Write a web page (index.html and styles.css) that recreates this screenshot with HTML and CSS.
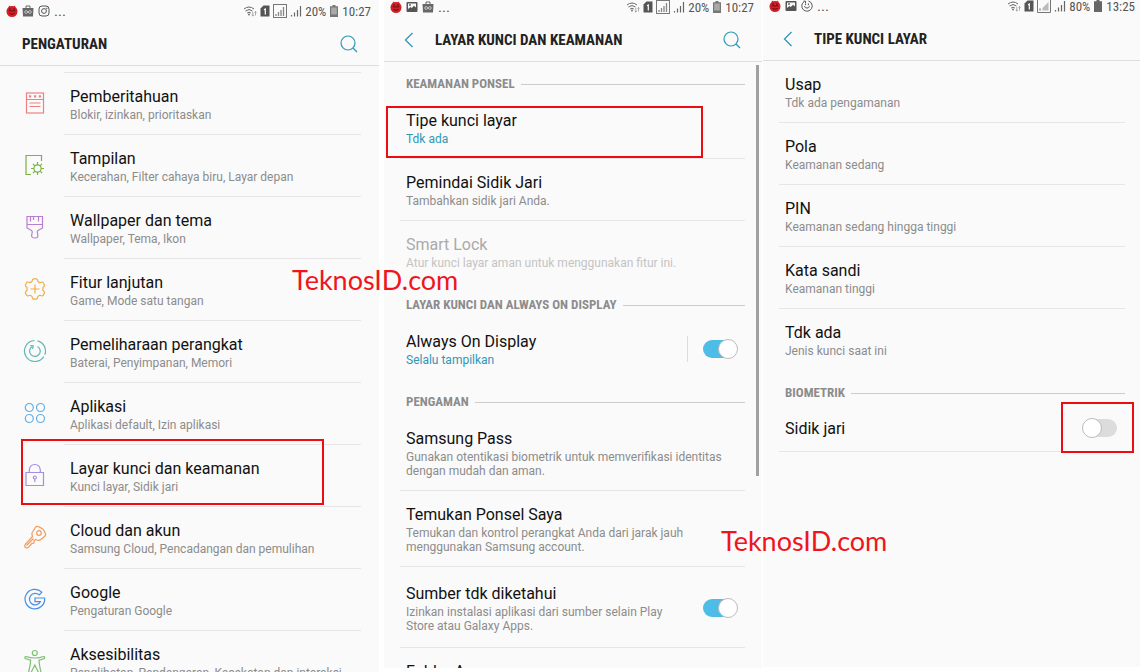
FILE: index.html
```html
<!DOCTYPE html>
<html lang="id">
<head>
    <meta charset="UTF-8">
    <title>Pengaturan Layar Kunci</title>
    <link rel="stylesheet" href="styles.css">
</head>
<body>
    <!-- shared icons -->
    <svg class="sprite" aria-hidden="true">
        <symbol id="bug" viewBox="0 0 12 12">
            <path d="M3 .5l1.300 1h3.400L9 .5l.5 2.500h-7z" fill="#d3232a"/>
            <circle cx="6" cy="6.500" r="5.500" fill="#cf2127"/>
            <path d="M4 3v2.500M8 3v2.500M2.800 5.800h2M7.200 5.800h2M3.400 8.500q2.600 1.500 5.200 0M6 5v2" stroke="#5e0a0d" stroke-width=".9" fill="none"/>
        </symbol>
        <symbol id="bag" viewBox="0 0 12 12">
            <path d="M4 3V1h4v2" fill="none" stroke="#666"/>
            <path d="M.5 3h11L11 11.500H1z" fill="#666"/>
            <path d="M6 7C4.500 5 2.800 5.500 2.800 7s1.700 2 3.200 0 3.200-1.500 3.200 0S7.500 9 6 7z" fill="none" stroke="#eee" stroke-width=".8"/>
        </symbol>
        <symbol id="camera" viewBox="0 0 12 12">
            <g fill="none" stroke="#555"><rect x="1" y="1" width="10" height="10" rx="3"/><circle cx="6" cy="6" r="2.400"/></g>
            <circle cx="8.800" cy="3.200" r=".7" fill="#555"/>
        </symbol>
        <symbol id="photo" viewBox="0 0 12 12">
            <rect x=".5" y="1" width="11" height="10" rx="1" fill="#555"/>
            <path d="M2 2.500h8v4L8 4.800 5.800 7 4.500 6 2 8z" fill="#fafafa"/>
            <circle cx="4" cy="4" r=".9" fill="#555"/>
        </symbol>
        <symbol id="smile" viewBox="0 0 12 12">
            <g fill="none" stroke="#555"><path d="M7.500 1A5.200 5.200 0 1 1 3.200 1.600M3.500 6.200a2.600 2.600 0 0 0 5 0M4.600 3.500v1.700M7.400 3.500v1.700M2.500 1.200h2v2"/></g>
        </symbol>
        <symbol id="wifi" viewBox="0 0 14 12">
            <path d="M1 4q5-4 10 0M2.500 6q3.500-3 7 0M4.200 8q1.800-1.600 3.600 0" fill="none" stroke="#666"/>
            <circle cx="6" cy="9.500" r=".9" fill="#666"/>
            <path d="M9.800 7v4M8.700 10l1.100 1 1.100-1M12.500 10.500v-4M11.500 7.500l1-1 1 1" fill="none" stroke="#888" stroke-width=".7"/>
        </symbol>
        <symbol id="sim" viewBox="0 0 10 12">
            <path d="M3.500 .5H9.500v11H.5V3.500z" fill="#555"/>
            <path d="M4 4.800L5.300 4v5.500" fill="none" stroke="#fff" stroke-width="1.200"/>
        </symbol>
        <symbol id="signal-box" viewBox="0 0 14 14">
            <rect x=".5" y=".5" width="13" height="13" fill="none" stroke="#777"/>
            <path d="M3 12v-2M5.500 12V8M8 12V6M10.500 12V3" stroke="#888" stroke-width="1.300"/>
        </symbol>
        <symbol id="signal-low" viewBox="0 0 14 14">
            <path d="M.5 .5v13h13V.5" fill="none" stroke="#777"/>
            <path d="M5.500 11.500V9L11.500 3v8.500z" fill="#bbb"/><path d="M3 11.500v-2" stroke="#555"/>
        </symbol>
        <symbol id="signal" viewBox="0 0 12 12">
            <path d="M1.500 11.500V10M4.500 11.500V7.500M7.500 11.500V5M10.500 11.500V1" stroke="#666" stroke-width="1.200"/>
        </symbol>
        <symbol id="battery" viewBox="0 0 8 12">
            <path d="M2.500 0h3v1.200H8V12H0V1.200h2.500z" fill="#666"/>
        </symbol>
        <symbol id="battery-low" viewBox="0 0 8 12">
            <path d="M2.500 0h3v1.200H8V12H0V1.200h2.500z" fill="#777"/><path d="M1.200 2.500h5.600v7H1.200z" fill="#a9a9a9"/>
        </symbol>
        <symbol id="search" viewBox="0 0 18 18">
            <g fill="none" stroke="#2f97b7" stroke-width="1.200"><circle cx="8" cy="8" r="7"/><path d="M13 13l4 4"/></g>
        </symbol>
        <symbol id="back" viewBox="0 0 10 16">
            <path d="M8.500 1L1.500 8l7 7" fill="none" stroke="#2f97b7" stroke-width="1.300"/>
        </symbol>
    </svg>

    <main class="screens">
        <section class="screen">
            <div class="status">
                <svg class="s12"><use href="#bug"/></svg>
                <svg class="s12"><use href="#bag"/></svg>
                <svg class="s12"><use href="#camera"/></svg>
                <span class="dots">...</span>
                <div class="status-right">
                    <svg class="wifi"><use href="#wifi"/></svg>
                    <svg class="sim"><use href="#sim"/></svg>
                    <svg class="s14"><use href="#signal-box"/></svg>
                    <svg class="s12"><use href="#signal"/></svg>
                    <span>20%</span>
                    <svg class="battery"><use href="#battery-low"/></svg>
                    <span>10:27</span>
                </div>
            </div>
            <header class="bar bar-main">
                <h1>PENGATURAN</h1>
                <button class="icon-btn" type="button" aria-label="Cari"><svg class="s18"><use href="#search"/></svg></button>
            </header>
            <ul class="menu">
                <li class="item">
                    <svg class="icon" viewBox="0 0 24 24" stroke="#f08080">
                        <rect x="3.500" y="2" width="17" height="20"/><path d="M3.500 8.500h17M6.500 12h11M6.500 15.500h11"/>
                        <path d="M6 5.300h2.200M11 5.300h2.200M15.800 5.300H18" stroke-width="2.200"/>
                    </svg>
                    <a class="text" href="#"><b>Pemberitahuan</b><small>Blokir, izinkan, prioritaskan</small></a>
                </li>
                <li class="item">
                    <svg class="icon" viewBox="0 0 24 24" stroke="#7cb342">
                        <path d="M8 21.500H3V2.500h15.500V8"/><circle cx="14.500" cy="15.500" r="3.600"/>
                        <path d="M14.500 9v2.900M14.500 19.100V22M8 15.500h2.900M18.100 15.500H21M9.900 10.900l2 2M17.100 18.100l2 2M19.100 10.900l-2 2M11.900 18.100l-2 2"/>
                    </svg>
                    <a class="text" href="#"><b>Tampilan</b><small>Kecerahan, Filter cahaya biru, Layar depan</small></a>
                </li>
                <li class="item">
                    <svg class="icon" viewBox="0 0 24 24" stroke="#b67fd0">
                        <path d="M4 1.500h15.500V13l-4.500 2.500q-1 .5-.7 1.800l.6 3.200q.2 2.500-3.100 2.500t-3.200-2.500l.6-3.200q.3-1.300-.7-1.800L4 13zM4 9.500h15.500M7.500 1.500v5M10.500 1.500v3.500M15.500 1.500v5"/>
                    </svg>
                    <a class="text" href="#"><b>Wallpaper dan tema</b><small>Wallpaper, Tema, Ikon</small></a>
                </li>
                <li class="item">
                    <svg class="icon" viewBox="0 0 24 24" stroke="#f2ac48">
                        <path d="M9 4.500q.3-2.500 1.300-2.700h3.200q1 .2 1.400 2.700 1 .8 2 1.100 2.300-1 3.100-.3l1.600 2.800q.2 1-1.700 2.400v2.900q1.900 1.400 1.700 2.400L20 18.600q-.8.7-3.100-.3-1 .3-2 1.100-.4 2.600-1.400 2.800h-3.200q-1-.2-1.300-2.800-1-.8-2-1.100-2.300 1-3.100.3l-1.600-2.800q-.2-1 1.700-2.400v-2.900Q2.100 9.100 2.300 8.100l1.600-2.800q.8-.7 3.100.3 1-.3 2-1.100zM7.500 12h9M12 7.500v9"/>
                    </svg>
                    <a class="text" href="#"><b>Fitur lanjutan</b><small>Game, Mode satu tangan</small></a>
                </li>
                <li class="item">
                    <svg class="icon" viewBox="0 0 24 24" stroke="#5db8b5">
                        <path d="M14.500 1.800a10.500 10.500 0 0 1 7.300 13.900M20.800 17.700A10.500 10.500 0 1 1 11.500 1.500M14.500 7.500a5.300 5.300 0 1 1-5.500.2M7.200 6.500l3 .3-.6 3.200"/>
                    </svg>
                    <a class="text" href="#"><b>Pemeliharaan perangkat</b><small>Baterai, Penyimpanan, Memori</small></a>
                </li>
                <li class="item">
                    <svg class="icon" viewBox="0 0 24 24" stroke="#62aee0">
                        <circle cx="6.300" cy="6.500" r="4"/><circle cx="17.500" cy="6.500" r="4"/><circle cx="6.300" cy="17.500" r="4"/><circle cx="17.500" cy="17.500" r="4"/>
                    </svg>
                    <a class="text" href="#"><b>Aplikasi</b><small>Aplikasi default, Izin aplikasi</small></a>
                </li>
                <li class="item">
                    <svg class="icon" viewBox="0 0 24 24" stroke="#a58ce6">
                        <path d="M3 9.500h17.500v13H3zM6.300 9.500V7q.5-5.500 5.500-5.500T17.300 7v2.500M11.800 19v-3"/><circle cx="11.800" cy="14.500" r="1.500"/>
                    </svg>
                    <a class="text" href="#"><b>Layar kunci dan keamanan</b><small>Kunci layar, Sidik jari</small></a>
                    <span class="mark mark-menu"></span>
                </li>
                <li class="item">
                    <svg class="icon" viewBox="0 0 24 24" stroke="#f29a5c">
                        <path d="M12.500 2.300q1-1.300 3-.6l2.500 1.200q2.500 1.200 3.500 3.600l1 2.500q.4 1.500-1 2.500l-4 3.200q-1.500 1-3.500.3l-1.500-.5-1.500 1.500v2l-2 .3-3.500 4q-1.500 1.200-3 .2t0-3.500l7-7.500-.5-2q-.3-1.500.5-2.500zM3.500 20.500l7-7"/><circle cx="16" cy="8" r="2.300"/>
                    </svg>
                    <a class="text" href="#"><b>Cloud dan akun</b><small>Samsung Cloud, Pencadangan dan pemulihan</small></a>
                </li>
                <li class="item">
                    <svg class="icon" viewBox="0 0 24 24" stroke="#4b8fe2">
                        <path d="M18.800 5.200A9.800 9.800 0 1 0 21.600 11H12v3.600h5.500a5.800 5.800 0 1 1-1.300-6.700zM16.200 7.900l2.600-2.700"/>
                    </svg>
                    <a class="text" href="#"><b>Google</b><small>Pengaturan Google</small></a>
                </li>
                <li class="item">
                    <svg class="icon" viewBox="0 0 24 24" stroke="#7fbf72">
                        <circle cx="11.800" cy="4" r="2.500"/>
                        <path d="M3 7.500q4 1.500 8.800 1.500t8.800-1.500q1.500.2.900 2L16 11.200l.5 5 1.500 7.300h-2.500L11.800 16l-3.700 7.500H5.600l1.500-7.300.5-5L2.100 9.500q-.6-1.800.9-2z"/>
                    </svg>
                    <a class="text" href="#"><b>Aksesibilitas</b><small>Penglihatan, Pendengaran, Kecekatan dan interaksi</small></a>
                </li>
            </ul>
        </section>

        <section class="screen screen-security">
            <div class="status">
                <svg class="s12"><use href="#bug"/></svg>
                <svg class="s12"><use href="#photo"/></svg>
                <svg class="s12"><use href="#bag"/></svg>
                <span class="dots">...</span>
                <div class="status-right">
                    <svg class="wifi"><use href="#wifi"/></svg>
                    <svg class="sim"><use href="#sim"/></svg>
                    <svg class="s14"><use href="#signal-box"/></svg>
                    <svg class="s12"><use href="#signal"/></svg>
                    <span>20%</span>
                    <svg class="battery"><use href="#battery-low"/></svg>
                    <span>10:27</span>
                </div>
            </div>
            <header class="bar">
                <button class="icon-btn back" type="button" aria-label="Kembali"><svg><use href="#back"/></svg></button>
                <h1>LAYAR KUNCI DAN KEAMANAN</h1>
                <button class="icon-btn" type="button" aria-label="Cari"><svg class="s18"><use href="#search"/></svg></button>
            </header>
            <div class="list">
                <h2>KEAMANAN PONSEL</h2>
                <div class="row">
                    <a class="text" href="#"><b>Tipe kunci layar</b><small class="value">Tdk ada</small></a>
                    <span class="mark mark-type"></span>
                </div>
                <div class="row"><a class="text" href="#"><b>Pemindai Sidik Jari</b><small>Tambahkan sidik jari Anda.</small></a></div>
                <div class="row last disabled"><div class="text"><b>Smart Lock</b><small>Atur kunci layar aman untuk menggunakan fitur ini.</small></div></div>
                <h2>LAYAR KUNCI DAN ALWAYS ON DISPLAY</h2>
                <div class="row last">
                    <label class="text" for="aod"><b>Always On Display</b><small class="value">Selalu tampilkan</small></label>
                    <span class="split"></span>
                    <input class="switch" type="checkbox" id="aod" checked>
                </div>
                <h2>PENGAMAN</h2>
                <div class="row"><a class="text" href="#"><b>Samsung Pass</b><small>Gunakan otentikasi biometrik untuk memverifikasi identitas dengan mudah dan aman.</small></a></div>
                <div class="row"><a class="text narrow" href="#"><b>Temukan Ponsel Saya</b><small>Temukan dan kontrol perangkat Anda dari jarak jauh menggunakan Samsung account.</small></a></div>
                <div class="row tall">
                    <label class="text narrow" for="unknown"><b>Sumber tdk diketahui</b><small>Izinkan instalasi aplikasi dari sumber selain Play Store atau Galaxy Apps.</small></label>
                    <input class="switch" type="checkbox" id="unknown" checked>
                </div>
                <div class="row"><a class="text" href="#"><b>Folder Aman</b></a></div>
            </div>
            <span class="scrollbar"></span>
        </section>

        <section class="screen screen-type">
            <div class="status">
                <svg class="s12"><use href="#bug"/></svg>
                <svg class="s12"><use href="#photo"/></svg>
                <svg class="s12"><use href="#smile"/></svg>
                <span class="dots">...</span>
                <div class="status-right">
                    <svg class="wifi"><use href="#wifi"/></svg>
                    <svg class="sim"><use href="#sim"/></svg>
                    <svg class="s14"><use href="#signal-low"/></svg>
                    <svg class="s12"><use href="#signal"/></svg>
                    <span>80%</span>
                    <svg class="battery"><use href="#battery"/></svg>
                    <span>13:25</span>
                </div>
            </div>
            <header class="bar">
                <button class="icon-btn back" type="button" aria-label="Kembali"><svg><use href="#back"/></svg></button>
                <h1>TIPE KUNCI LAYAR</h1>
            </header>
            <div class="list">
                <div class="row"><a class="text" href="#"><b>Usap</b><small>Tdk ada pengamanan</small></a></div>
                <div class="row"><a class="text" href="#"><b>Pola</b><small>Keamanan sedang</small></a></div>
                <div class="row"><a class="text" href="#"><b>PIN</b><small>Keamanan sedang hingga tinggi</small></a></div>
                <div class="row"><a class="text" href="#"><b>Kata sandi</b><small>Keamanan tinggi</small></a></div>
                <div class="row last"><a class="text" href="#"><b>Tdk ada</b><small>Jenis kunci saat ini</small></a></div>
                <h2>BIOMETRIK</h2>
                <div class="row single">
                    <label class="text" for="finger"><b>Sidik jari</b></label>
                    <input class="switch" type="checkbox" id="finger">
                    <span class="mark mark-switch"></span>
                </div>
            </div>
        </section>

        <span class="watermark watermark-left">TeknosID.com</span>
        <span class="watermark watermark-right">TeknosID.com</span>
    </main>
</body>
</html>
```

FILE: styles.css
```css
:root {
    --accent: #2f97b7;
    --switch: #4dbce6;
    --line: #e6e6e6;
    --muted: #8c8c8c;
    --mark: #ec0c12;
}

*,
*::before,
*::after {
    box-sizing: border-box;
}

body {
    margin: 0;
    background: #fff;
    color: #111;
    font-family: Roboto, sans-serif;
    overflow: hidden;
}

.sprite {
    position: absolute;
    width: 0;
    height: 0;
}

.screens {
    position: relative;
    display: flex;
    height: 100vh;
    overflow: hidden;
}

.screen {
    position: relative;
    flex: 379 1 0;
    min-width: 0;
    height: 100vh;
    background: #fafafa;
    overflow: hidden;
}

.screen-security {
    flex-grow: 378;
    margin: -4px 1px 0 5px;
}

.screen-type {
    flex-grow: 377;
    margin-top: -5px;
}

/* status bar */
.status {
    display: flex;
    align-items: center;
    gap: 4px;
    height: 22px;
    padding: 0 8px 0 6px;
    color: #555;
    font-family: "Roboto Condensed", Roboto, sans-serif;
    font-size: 13px;
}

.screen-type .status {
    padding-right: 5px;
}

.dots {
    font-size: 15px;
}

.status-right {
    display: flex;
    align-items: center;
    gap: 3px;
    margin-left: auto;
}

.s12 { width: 12px; height: 12px; }
.s14 { width: 14px; height: 14px; }
.s18 { width: 18px; height: 18px; }
.wifi { width: 14px; height: 12px; }
.sim { width: 10px; height: 12px; }
.battery { width: 8px; height: 12px; margin: 0 1px; }

/* title bar */
.bar {
    display: flex;
    align-items: center;
    height: 44px;
    padding: 0 21px 0 20px;
    border-bottom: 1px solid #dedede;
}

.bar-main {
    padding-left: 22px;
}

h1 {
    flex: 1;
    margin: 0;
    padding-top: 1px;
    color: #222;
    font-family: "Roboto Condensed", Roboto, sans-serif;
    font-size: 15px;
    font-weight: 700;
    line-height: 20px;
}

.icon-btn {
    display: flex;
    padding: 0;
    border: 0;
    background: none;
    cursor: pointer;
}

.back {
    width: 31px;
}

.back svg {
    width: 10px;
    height: 16px;
}

/* rows */
.text {
    flex: 1;
    color: inherit;
    text-decoration: none;
}

.text b {
    display: block;
    font-size: 16px;
    font-weight: 400;
    line-height: 20px;
}

.text small {
    display: block;
    margin-top: 1px;
    color: var(--muted);
    font-size: 12px;
    line-height: 14px;
}

.text .value {
    color: var(--accent);
}

.menu {
    margin: 6px 0 0;
    padding: 0;
    list-style: none;
}

.item {
    position: relative;
    display: flex;
    align-items: center;
    gap: 17px;
    padding: 0 18px 0 23px;
}

.item .text {
    height: 62px;
    padding: 14px 0 0 6px;
    border-top: 1px solid var(--line);
    white-space: nowrap;
}

.icon {
    flex: none;
    width: 24px;
    height: 24px;
    fill: none;
    stroke-width: 1.2;
}

.list {
    padding: 0 17px 0 16px;
}

.screen-type .list {
    padding-right: 15px;
}

.row {
    position: relative;
    display: flex;
    align-items: center;
    padding: 12px 8px 12px 6px;
    border-bottom: 1px solid var(--line);
}

.row .text {
    padding-top: 2px;
}

.tall {
    padding-top: 15px;
    padding-bottom: 14px;
}

.single {
    padding-top: 11px;
    padding-bottom: 12px;
}

.last {
    border-bottom-color: transparent;
}

.narrow {
    padding-right: 40px;
}

.disabled .text,
.disabled .text small {
    color: #c4c4c4;
}

.disabled .text b {
    color: #aaa;
}

h2 {
    display: flex;
    align-items: center;
    gap: 6px;
    margin: 0;
    padding: 14px 0 5px 6px;
    color: var(--muted);
    font-family: "Roboto Condensed", Roboto, sans-serif;
    font-size: 13px;
    font-weight: 700;
    line-height: 16px;
}

h2::after {
    content: "";
    flex: 1;
    height: 1px;
    background: #ccc;
}

/* switch */
.switch {
    appearance: none;
    position: relative;
    width: 34px;
    height: 18px;
    margin: 0;
    border-radius: 9px;
    background: #dcdcdc;
    cursor: pointer;
}

.switch::before {
    content: "";
    position: absolute;
    top: -1px;
    left: -1px;
    width: 20px;
    height: 20px;
    border: 1px solid #bbb;
    border-radius: 50%;
    background: #fff;
}

.switch:checked {
    background: var(--switch);
}

.switch:checked::before {
    left: 15px;
}

.split {
    width: 1px;
    height: 26px;
    margin-right: 15px;
    background: #ddd;
}

.scrollbar {
    position: absolute;
    top: 69px;
    right: 3px;
    width: 3px;
    height: 411px;
    background: #a0a0a0;
}

/* red frames over the rows */
.mark {
    position: absolute;
    border: 2px solid var(--mark);
    pointer-events: none;
}

.mark-menu {
    top: -5px;
    right: 55px;
    bottom: 1px;
    left: 21px;
}

.mark-type {
    top: 9px;
    right: 42px;
    bottom: 0;
    left: -14px;
}

.mark-switch {
    top: -4px;
    right: -9px;
    bottom: -2px;
    width: 73px;
}

.watermark {
    position: absolute;
    color: #f0141c;
    font-family: Lato, sans-serif;
    font-size: 27px;
    line-height: 32px;
}

.watermark-left {
    top: 264px;
    left: 292px;
}

.watermark-right {
    top: 525px;
    left: 721px;
}
```
